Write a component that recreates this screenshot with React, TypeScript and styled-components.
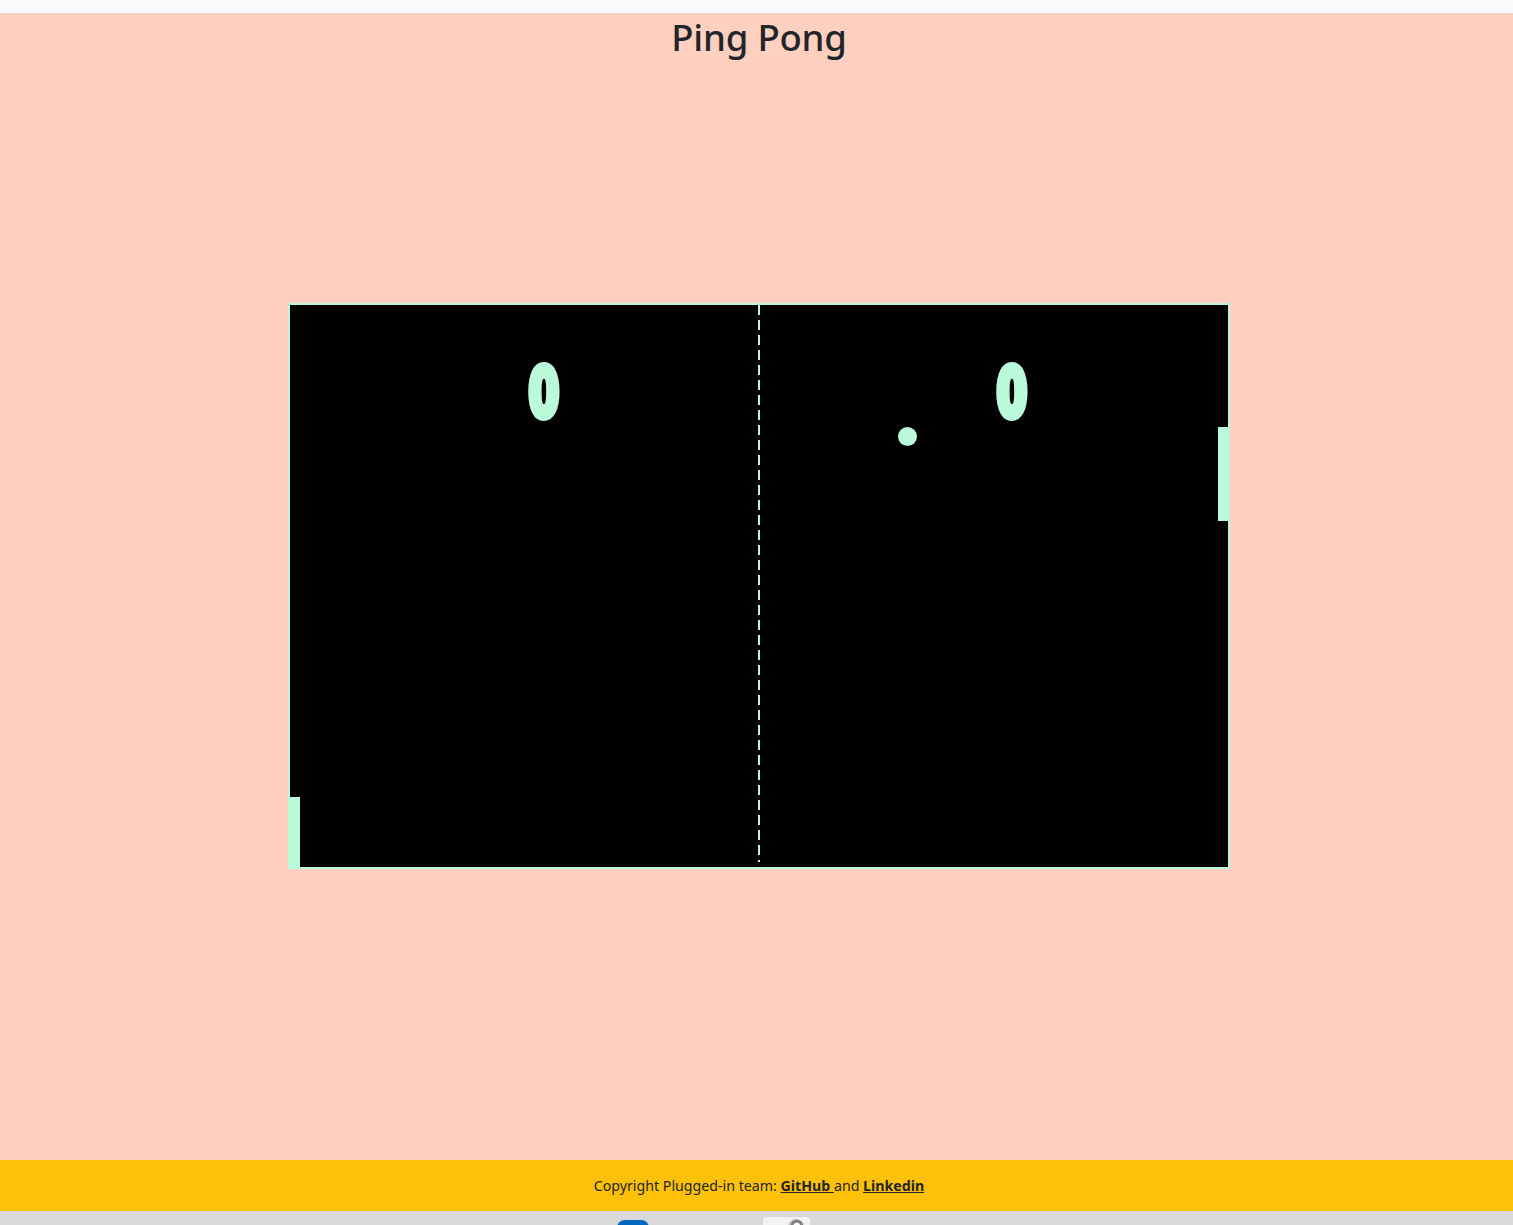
import styled, { createGlobalStyle } from "styled-components";

const mint = "#bafadb";

const GlobalStyle = createGlobalStyle`
  html, body {
    margin: 0;
    padding: 0;
    background: #f8f9fa;
  }
  body {
    font-family: "Noto Sans", "Open Sans", sans-serif;
    color: #212529;
  }
`;

const Page = styled.div`
  display: flex;
  flex-direction: column;
  padding-top: 13px;
  overflow: hidden;
  height: 1225px;
`;

const Main = styled.main`
  height: 1147px;
  background: #ffcfbf;
  display: grid;
  grid-template-rows: 59px 1fr 61px;
  padding-left: 5px;
`;

const Title = styled.h1`
  margin: 0;
  padding-top: 1px;
  text-align: center;
  font-size: 36.5px;
  font-weight: 500;
  line-height: 46px;
  letter-spacing: -0.2px;
  color: #212529;
`;

const Stage = styled.div`
  display: flex;
  align-items: center;
  justify-content: center;
`;

const Board = styled.div`
  position: relative;
  width: 942px;
  height: 566px;
  box-sizing: border-box;
  background: #000;
  border: 2px solid ${mint};
  overflow: hidden;
`;

const Net = styled.div`
  position: absolute;
  left: 468px;
  top: 0;
  bottom: 5px;
  width: 2px;
  background: repeating-linear-gradient(
    to bottom,
    ${mint} 0 10px,
    transparent 10px 15px
  );
`;

const Score = styled.span<{ $left: number }>`
  position: absolute;
  top: 46px;
  left: ${(p) => p.$left}px;
  width: 60px;
  text-align: center;
  font-family: "DejaVu Sans", sans-serif;
  font-weight: 700;
  font-size: 68px;
  line-height: 84px;
  color: ${mint};
  -webkit-text-stroke: 8px ${mint};
  transform: scaleX(0.64);
`;

const Paddle = styled.div<{ $side: "left" | "right"; $top: number }>`
  position: absolute;
  ${(p) => p.$side}: 0;
  top: ${(p) => p.$top}px;
  width: 10px;
  height: 94px;
  background: ${mint};
`;

const Ball = styled.div`
  position: absolute;
  left: 608px;
  top: 122px;
  width: 19px;
  height: 19px;
  border-radius: 50%;
  background: ${mint};
`;

const Footer = styled.footer`
  height: 51px;
  background: #ffc107;
  display: flex;
  align-items: center;
  justify-content: center;
  font-size: 14.2px;
  color: #212529;
  padding-left: 5px;
  white-space: pre;
`;

const Link = styled.a`
  color: #212529;
  font-weight: 700;
  text-decoration: underline;
`;

const Tray = styled.div`
  flex: 1;
  background: #d9d9d9;
  display: flex;
  align-items: flex-start;
  padding-top: 9px;
  padding-left: 617px;
  gap: 114px;
  overflow: hidden;
`;

const TrayPill = styled.div`
  width: 32px;
  height: 12px;
  border-radius: 8px 8px 0 0;
  background: #0067c0;
`;

const TrayBox = styled.div`
  width: 47px;
  height: 12px;
  margin-top: -3px;
  border-radius: 4px 4px 0 0;
  background: #f3f3f3;
  display: flex;
  justify-content: flex-end;
  padding-right: 6px;
  box-sizing: border-box;
`;

const TrayDot = styled.div`
  width: 16px;
  height: 16px;
  margin-top: 2px;
  border-radius: 50%;
  background: radial-gradient(circle at 55% 45%, #fff 0 3px, #8a7f7f 4px 6px, #cfc8c8 7px);
`;

export default function App() {
  return (
    <>
      <GlobalStyle />
      <Page>
        <Main>
          <Title>Ping Pong</Title>
          <Stage>
            <Board>
              <Net />
              <Score $left={224}>0</Score>
              <Score $left={692}>0</Score>
              <Ball />
              <Paddle $side="left" $top={492} />
              <Paddle $side="right" $top={122} />
            </Board>
          </Stage>
          <div />
        </Main>
        <Footer>
          {"Copyright Plugged-in team: "}
          <Link href="#">{"GitHub "}</Link>
          {"and "}
          <Link href="#">Linkedin</Link>
        </Footer>
        <Tray>
          <TrayPill />
          <TrayBox>
            <TrayDot />
          </TrayBox>
        </Tray>
      </Page>
    </>
  );
}
